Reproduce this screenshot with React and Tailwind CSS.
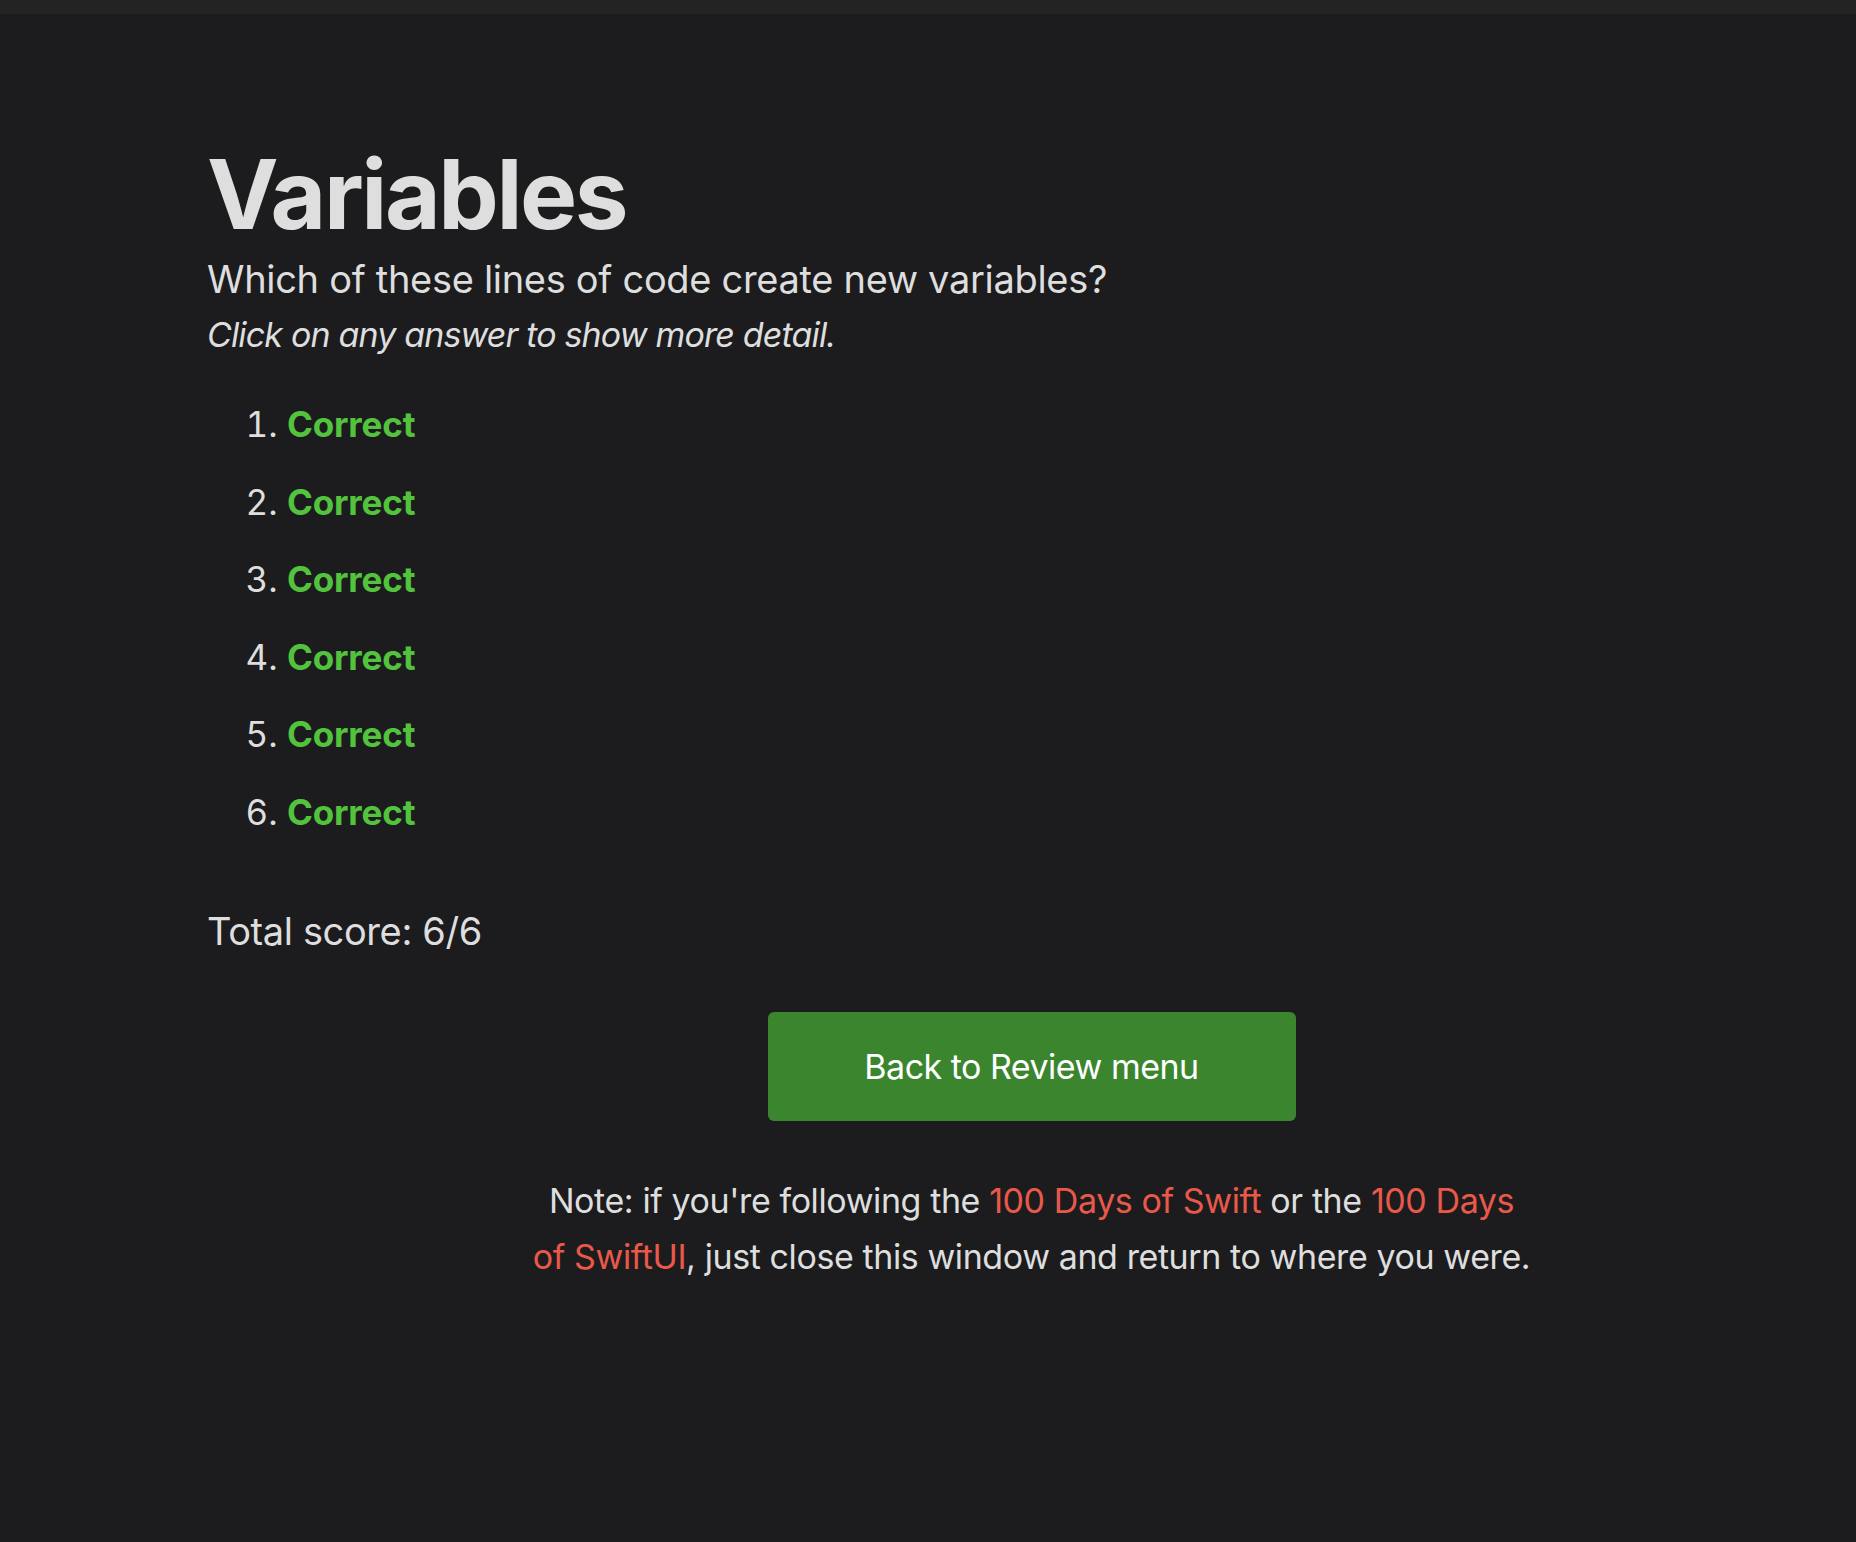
import React from 'react';

const answers = [1, 2, 3, 4, 5, 6];

const App = () => {
    return (
        <div className="min-h-screen bg-[#1c1c1e] text-[#dedede]" style={{ fontFamily: 'Inter, "Noto Sans", sans-serif' }}>
            <div className="h-[14px] bg-[#232323]" />
            <main className="pl-[207px] pt-[132px] pb-[200px]">
                <h1 className="text-[96px] font-bold leading-none tracking-[-0.025em]">Variables</h1>
                <p className="mt-[14px] text-[38px] leading-[46px] tracking-[-0.008em]">Which of these lines of code create new variables?</p>
                <p className="mt-[12px] text-[34px] italic leading-[42px] tracking-[-0.025em]">Click on any answer to show more detail.</p>

                <ol className="mt-[30px] list-decimal pl-[80px] text-[35px]">
                    {answers.map((n) => (
                        <li key={n} className="leading-[77.6px]">
                            <span className="font-bold tracking-[-0.005em] text-[#53c33e]">Correct</span>
                        </li>
                    ))}
                </ol>

                <p className="mt-[56px] text-[38px] leading-[46px] tracking-[-0.01em]">Total score: 6/6</p>

                <div className="mt-[58px] flex justify-center">
                    <button
                        type="button"
                        className="h-[109px] w-[528px] rounded-[6px] bg-[#3b852f] text-[34px] tracking-[-0.015em] text-white"
                    >
                        Back to Review menu
                    </button>
                </div>

                <p className="mx-auto mt-[52px] max-w-[1040px] text-center text-[34px] leading-[56px] tracking-[-0.012em]">
                    Note: if you're following the <a className="text-[#e9594a]">100 Days of Swift</a> or the{' '}
                    <a className="text-[#e9594a]">100 Days<br />of SwiftUI</a>, just close this window and return to where you were.
                </p>
            </main>
        </div>
    );
};

export default App;
